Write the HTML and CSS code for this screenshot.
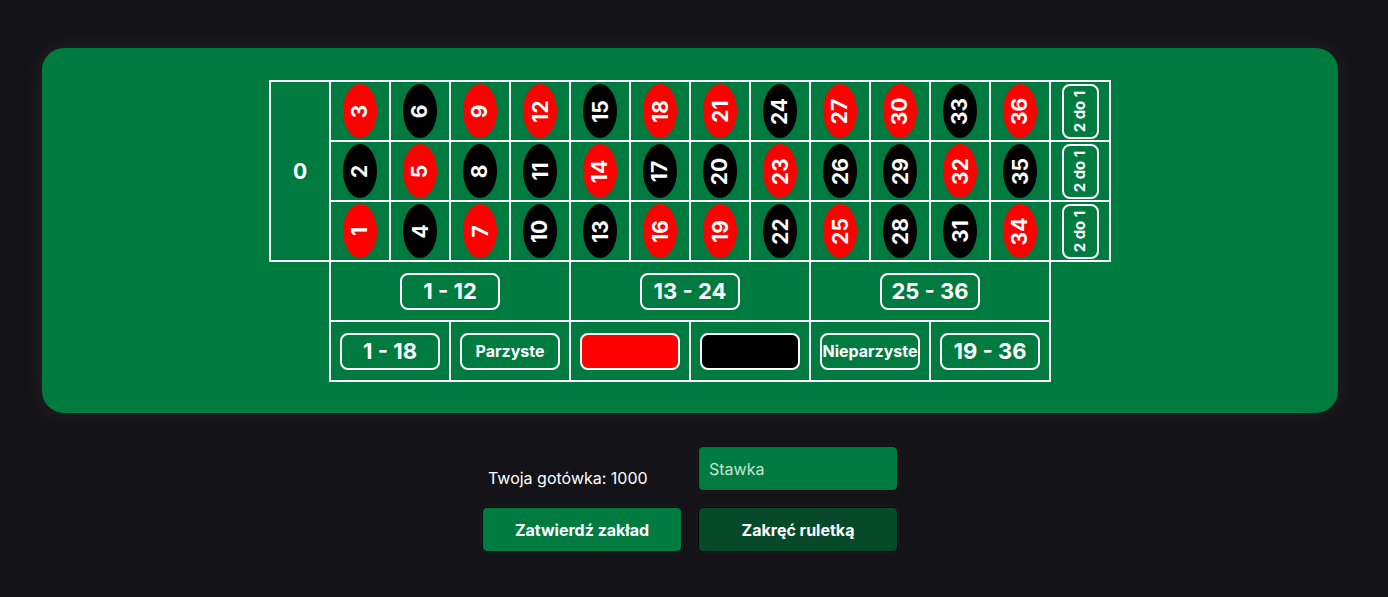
FILE: index.html
```html
<!DOCTYPE html>
<html lang="pl">
<head>
<meta charset="utf-8">
<title>Ruletka</title>
<link rel="stylesheet" href="styles.css">
</head>
<body>
<main class="page">
  <section class="felt">
    <div class="board">
      <div class="cell zero"><span class="zero-label">0</span></div>

      <div class="cell"><div class="chip red"><span class="rot">3</span></div></div>
      <div class="cell"><div class="chip black"><span class="rot">6</span></div></div>
      <div class="cell"><div class="chip red"><span class="rot">9</span></div></div>
      <div class="cell"><div class="chip red"><span class="rot">12</span></div></div>
      <div class="cell"><div class="chip black"><span class="rot">15</span></div></div>
      <div class="cell"><div class="chip red"><span class="rot">18</span></div></div>
      <div class="cell"><div class="chip red"><span class="rot">21</span></div></div>
      <div class="cell"><div class="chip black"><span class="rot">24</span></div></div>
      <div class="cell"><div class="chip red"><span class="rot">27</span></div></div>
      <div class="cell"><div class="chip red"><span class="rot">30</span></div></div>
      <div class="cell"><div class="chip black"><span class="rot">33</span></div></div>
      <div class="cell"><div class="chip red"><span class="rot">36</span></div></div>
      <div class="cell"><div class="col-bet"><span class="rot">2 do 1</span></div></div>

      <div class="cell"><div class="chip black"><span class="rot">2</span></div></div>
      <div class="cell"><div class="chip red"><span class="rot">5</span></div></div>
      <div class="cell"><div class="chip black"><span class="rot">8</span></div></div>
      <div class="cell"><div class="chip black"><span class="rot">11</span></div></div>
      <div class="cell"><div class="chip red"><span class="rot">14</span></div></div>
      <div class="cell"><div class="chip black"><span class="rot">17</span></div></div>
      <div class="cell"><div class="chip black"><span class="rot">20</span></div></div>
      <div class="cell"><div class="chip red"><span class="rot">23</span></div></div>
      <div class="cell"><div class="chip black"><span class="rot">26</span></div></div>
      <div class="cell"><div class="chip black"><span class="rot">29</span></div></div>
      <div class="cell"><div class="chip red"><span class="rot">32</span></div></div>
      <div class="cell"><div class="chip black"><span class="rot">35</span></div></div>
      <div class="cell"><div class="col-bet"><span class="rot">2 do 1</span></div></div>

      <div class="cell"><div class="chip red"><span class="rot">1</span></div></div>
      <div class="cell"><div class="chip black"><span class="rot">4</span></div></div>
      <div class="cell"><div class="chip red"><span class="rot">7</span></div></div>
      <div class="cell"><div class="chip black"><span class="rot">10</span></div></div>
      <div class="cell"><div class="chip black"><span class="rot">13</span></div></div>
      <div class="cell"><div class="chip red"><span class="rot">16</span></div></div>
      <div class="cell"><div class="chip red"><span class="rot">19</span></div></div>
      <div class="cell"><div class="chip black"><span class="rot">22</span></div></div>
      <div class="cell"><div class="chip red"><span class="rot">25</span></div></div>
      <div class="cell"><div class="chip black"><span class="rot">28</span></div></div>
      <div class="cell"><div class="chip black"><span class="rot">31</span></div></div>
      <div class="cell"><div class="chip red"><span class="rot">34</span></div></div>
      <div class="cell"><div class="col-bet"><span class="rot">2 do 1</span></div></div>

      <div class="cell dozen d1"><div class="bet big">1 - 12</div></div>
      <div class="cell dozen d2"><div class="bet big">13 - 24</div></div>
      <div class="cell dozen d3"><div class="bet big">25 - 36</div></div>

      <div class="cell half h1"><div class="bet big">1 - 18</div></div>
      <div class="cell half"><div class="bet small">Parzyste</div></div>
      <div class="cell half"><div class="bet swatch red"></div></div>
      <div class="cell half"><div class="bet swatch black"></div></div>
      <div class="cell half"><div class="bet small">Nieparzyste</div></div>
      <div class="cell half"><div class="bet big">19 - 36</div></div>
    </div>
  </section>

  <section class="controls">
    <div class="cash">Twoja gotówka: 1000</div>
    <input class="stake" type="text" placeholder="Stawka">
    <button class="btn confirm" type="button">Zatwierdź zakład</button>
    <button class="btn spin" type="button">Zakręć ruletką</button>
  </section>
</main>
</body>
</html>
```

FILE: styles.css
```css
* { box-sizing: border-box; }

html, body {
  margin: 0;
  padding: 0;
  background: #131318;
  font-family: Inter, "Noto Sans", "Liberation Sans", sans-serif;
  color: #fff;
}

.page {
  padding-top: 48px;
  padding-bottom: 40px;
}

.felt {
  margin: 0 50px 0 42px;
  height: 365px;
  background: #007b40;
  border-radius: 22px;
  box-shadow: 0 0 22px rgba(255, 255, 255, 0.07);
  display: flex;
  justify-content: center;
  padding-top: 33px;
}

.board {
  display: grid;
  grid-template-columns: repeat(14, 60px);
  grid-template-rows: repeat(5, 60px);
  height: 300px;
}

.cell {
  outline: 2px solid #fff;
  outline-offset: -1px;
  display: flex;
  align-items: center;
  justify-content: center;
}

.zero {
  grid-row: 1 / 4;
  grid-column: 1;
}

.zero-label {
  font-size: 21px;
  font-weight: 700;
}

.chip {
  width: 34px;
  height: 54px;
  border-radius: 50%;
  display: flex;
  align-items: center;
  justify-content: center;
  color: #fff;
}

.chip.red { background: #ff0000; }
.chip.black { background: #000; }

.rot {
  display: inline-block;
  transform: rotate(-90deg);
  white-space: nowrap;
  font-weight: 700;
  font-size: 21px;
  line-height: 1;
}

.col-bet {
  width: 37px;
  height: 55px;
  border: 2px solid #fff;
  border-radius: 8px;
  display: flex;
  align-items: center;
  justify-content: center;
}

.col-bet .rot {
  font-size: 15px;
}

.d1 { grid-column: 2 / 6; }
.d2 { grid-column: 6 / 10; }
.d3 { grid-column: 10 / 14; }

.half { grid-column: span 2; }
.h1 { grid-column: 2 / 4; }

.bet {
  width: 100px;
  height: 37px;
  border: 2px solid #fff;
  border-radius: 8px;
  display: flex;
  align-items: center;
  justify-content: center;
  font-weight: 700;
  white-space: nowrap;
  padding: 0;
}

.bet.big { font-size: 22px; }
.bet.small { font-size: 16px; }

.bet.swatch.red { background: #ff0000; }
.bet.swatch.black { background: #000; }

.controls {
  margin: 33px auto 0;
  padding-right: 8px;
  display: grid;
  grid-template-columns: 200px 200px;
  grid-template-rows: 45px 45px;
  gap: 16px;
  justify-content: center;
}

.cash {
  align-self: end;
  padding-left: 6px;
  font-size: 16px;
  line-height: 26px;
}

.stake {
  height: 45px;
  width: 200px;
  background: #007b40;
  border: 1px solid #0b0b0e;
  border-radius: 5px;
  padding: 0 10px;
  font-family: inherit;
  font-size: 16px;
  color: #fff;
  box-shadow: 0 0 6px rgba(255, 255, 255, 0.05);
  outline: none;
}

.stake::placeholder {
  color: #c9e4d2;
  opacity: 1;
}

.btn {
  height: 45px;
  width: 200px;
  border: 1px solid #0b0b0e;
  border-radius: 5px;
  font-family: inherit;
  font-size: 16px;
  font-weight: 700;
  color: #fff;
  cursor: pointer;
  box-shadow: 0 0 6px rgba(255, 255, 255, 0.05);
}

.btn.confirm { background: #007b40; }
.btn.spin { background: #064a2a; }
```
